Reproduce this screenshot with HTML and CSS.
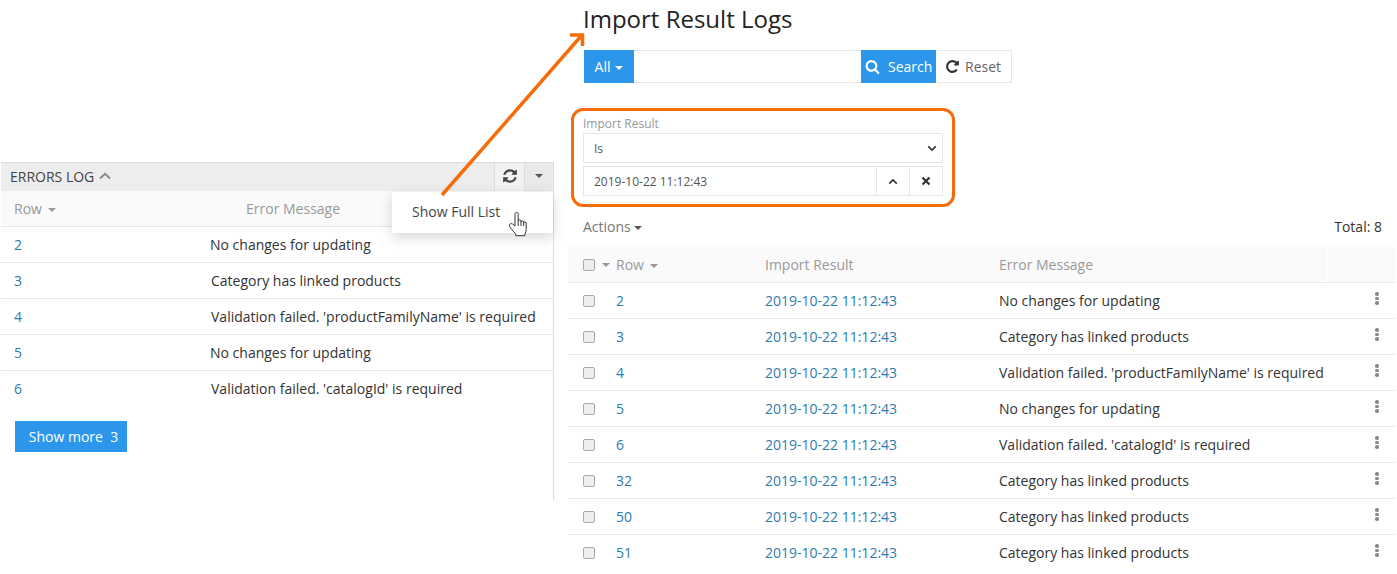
FILE: index.html
```html
<!DOCTYPE html>
<html lang="en">
<head>
  <meta charset="UTF-8">
  <title>Import Result Logs</title>
  <link rel="stylesheet" href="styles.css">
</head>
<body>
  <div class="page">
    <section class="panel">
      <div class="panel-title">
        <span class="panel-name">ERRORS LOG</span>
        <svg class="chevron" viewBox="0 0 12 8"><path d="M1 6.500 6 1.800l5 4.700" /></svg>
        <div class="panel-tools">
          <button class="tool tool-refresh">
            <svg class="fa" viewBox="0 0 1792 1792"><path d="M1639 1056q0 5-1 7-64 268-268 434.500t-478 166.500q-146 0-282.500-55t-243.500-157l-129 129q-19 19-45 19t-45-19-19-45v-448q0-26 19-45t45-19h448q26 0 45 19t19 45-19 45l-137 137q71 66 161 102t187 36q134 0 250-65t186-179q11-17 53-117 8-23 30-23h192q13 0 22.500 9.500t9.500 22.500zm25-800v448q0 26-19 45t-45 19h-448q-26 0-45-19t-19-45 19-45l138-138q-148-137-349-137-134 0-250 65t-186 179q-11 17-53 117-8 23-30 23h-199q-13 0-22.500-9.500t-9.500-22.500v-7q65-268 270-434.500t480-166.500q146 0 284 55.500t245 156.500l130-129q19-19 45-19t45 19 19 45z" /></svg>
          </button>
          <button class="tool tool-menu"><span class="caret caret-dark"></span></button>
        </div>
        <div class="menu">
          Show Full List
          <svg class="hand" viewBox="0 0 20 26"><path d="M7 15V3.200c0-2.400 3.200-2.400 3.200 0V10c0-1.600 2.800-1.600 2.800 0v1c0-1.500 2.700-1.500 2.700 0v1c0-1.400 2.500-1.400 2.500 0v6.500c0 2-.6 3-1.300 4.500v1.700H7.800v-1.500C6 21 4.500 19.500 2.800 17.200 1 14.800 1.200 13.200 2.500 12.700 3.800 12.300 5.500 13.500 7 15Z" /><path d="M10.200 10v5M13 11v4M15.700 12v3" /></svg>
        </div>
      </div>
      <div class="row row-head">
        <span class="cell-row">Row <span class="caret"></span></span>
        <span class="cell-head-msg">Error Message</span>
      </div>
      <div class="row"><a class="cell-row link">2</a><span class="nudge">No changes for updating</span></div>
      <div class="row"><a class="cell-row link">3</a><span>Category has linked products</span></div>
      <div class="row"><a class="cell-row link">4</a><span>Validation failed. 'productFamilyName' is required</span></div>
      <div class="row"><a class="cell-row link">5</a><span class="nudge">No changes for updating</span></div>
      <div class="row"><a class="cell-row link">6</a><span>Validation failed. 'catalogId' is required</span></div>
      <button class="btn-more">Show more&nbsp; 3</button>
    </section>

    <main class="logs">
      <h1>Import Result Logs</h1>

      <div class="search">
        <button class="btn-all">All<span class="caret caret-white"></span></button>
        <div class="search-input"></div>
        <button class="btn-search">
          <svg class="fa" viewBox="0 0 1792 1792"><path d="M1216 832q0-185-131.500-316.500t-316.500-131.500-316.500 131.500-131.500 316.500 131.500 316.500 316.500 131.500 316.500-131.500 131.500-316.500zm512 832q0 52-38 90t-90 38q-54 0-90-38l-343-342q-179 124-399 124-143 0-273.500-55.500t-225-150-150-225-55.500-273.500 55.500-273.500 150-225 225-150 273.500-55.500 273.500 55.500 225 150 150 225 55.500 273.500q0 220-124 399l343 343q37 37 37 90z" /></svg>
          Search
        </button>
        <button class="btn-reset">
          <svg class="fa" viewBox="0 0 1792 1792"><path d="M1664 256v448q0 26-19 45t-45 19h-448q-42 0-59-40-17-39 14-69l138-138q-148-137-349-137-104 0-198.500 40.500t-163.500 109.500-109.500 163.500-40.500 198.500 40.500 198.500 109.500 163.500 163.500 109.500 198.500 40.500q119 0 225-52t179-147q7-10 23-12 15 0 25 9l137 138q9 8 9.500 20.500t-7.500 22.500q-109 132-264 204.500t-327 72.500q-156 0-298-61t-245-164-164-245-61-298 61-298 164-245 245-164 298-61q147 0 284.500 55.500t244.500 156.500l130-129q29-31 70-14 39 17 39 59z" /></svg>
          Reset
        </button>
      </div>

      <div class="filter">
        <div class="filter-label">Import Result</div>
        <div class="filter-select">
          Is
          <svg class="small-chevron" viewBox="0 0 12 8"><path d="M1.500 1.500 6 6l4.500-4.500" /></svg>
        </div>
        <div class="filter-value">
          <span class="filter-text">2019-10-22 11:12:43</span>
          <span class="filter-btn"><svg class="small-chevron" viewBox="0 0 12 8"><path d="M1.500 6.500 6 2l4.500 4.500" /></svg></span>
          <span class="filter-btn"><svg class="small-x" viewBox="0 0 10 10"><path d="M1.500 1.500l7 7M8.500 1.500l-7 7" /></svg></span>
        </div>
      </div>

      <div class="actions">
        <span>Actions<span class="caret caret-dark"></span></span>
        <span class="total">Total: 8</span>
      </div>

      <div class="grid-row grid-head">
        <span class="check-cell"><span class="check"></span><span class="caret"></span></span>
        <span>Row <span class="caret"></span></span>
        <span>Import Result</span>
        <span>Error Message</span>
        <span class="head-end"></span>
      </div>
      <div class="grid-row"><span class="check-cell"><span class="check"></span></span><a class="link">2</a><a class="link">2019-10-22 11:12:43</a><span>No changes for updating</span><span class="dots"><i></i><i></i><i></i></span></div>
      <div class="grid-row"><span class="check-cell"><span class="check"></span></span><a class="link">3</a><a class="link">2019-10-22 11:12:43</a><span>Category has linked products</span><span class="dots"><i></i><i></i><i></i></span></div>
      <div class="grid-row"><span class="check-cell"><span class="check"></span></span><a class="link">4</a><a class="link">2019-10-22 11:12:43</a><span>Validation failed. 'productFamilyName' is required</span><span class="dots"><i></i><i></i><i></i></span></div>
      <div class="grid-row"><span class="check-cell"><span class="check"></span></span><a class="link">5</a><a class="link">2019-10-22 11:12:43</a><span>No changes for updating</span><span class="dots"><i></i><i></i><i></i></span></div>
      <div class="grid-row"><span class="check-cell"><span class="check"></span></span><a class="link">6</a><a class="link">2019-10-22 11:12:43</a><span>Validation failed. 'catalogId' is required</span><span class="dots"><i></i><i></i><i></i></span></div>
      <div class="grid-row"><span class="check-cell"><span class="check"></span></span><a class="link">32</a><a class="link">2019-10-22 11:12:43</a><span>Category has linked products</span><span class="dots"><i></i><i></i><i></i></span></div>
      <div class="grid-row"><span class="check-cell"><span class="check"></span></span><a class="link">50</a><a class="link">2019-10-22 11:12:43</a><span>Category has linked products</span><span class="dots"><i></i><i></i><i></i></span></div>
      <div class="grid-row"><span class="check-cell"><span class="check"></span></span><a class="link">51</a><a class="link">2019-10-22 11:12:43</a><span>Category has linked products</span><span class="dots"><i></i><i></i><i></i></span></div>
    </main>
  </div>

  <svg class="arrow" viewBox="0 0 1397 574">
    <path d="M442 195 582 35" />
    <path d="M570 35H582.500V46" />
  </svg>
</body>
</html>
```

FILE: styles.css
```css
* {
  box-sizing: border-box;
}
html, body {
  height: 100%;
}
body {
  margin: 0;
  overflow: hidden;
  background: #fff;
  font-family: 'Open Sans', 'Noto Sans', sans-serif;
  font-size: 14px;
  color: #333;
}
button {
  font: inherit;
  border: none;
  padding: 0;
}
.page {
  display: flex;
  align-items: flex-start;
  padding-left: 1px;
}
.link {
  color: #2e7bb0;
}
.fa {
  width: 14px;
  height: 14px;
  fill: currentColor;
  flex: none;
}
.caret {
  display: inline-block;
  width: 0;
  height: 0;
  margin-left: 2px;
  vertical-align: middle;
  border-top: 4px solid #999;
  border-left: 4px solid transparent;
  border-right: 4px solid transparent;
}
.caret-dark {
  border-top-color: #555;
}
.caret-white {
  border-top-color: #fff;
}

/* left panel */
.panel {
  width: 553px;
  height: 338px;
  margin-top: 162px;
  border-right: 1px solid #ddd;
}
.panel-title {
  position: relative;
  display: flex;
  align-items: center;
  height: 29px;
  padding: 0 1px 2px 9px;
  background: #ededed;
  border-top: 1px solid #ddd;
  color: #444;
}
.chevron {
  width: 12px;
  height: 8px;
  margin-left: 5px;
  fill: none;
  stroke: #888;
  stroke-width: 2;
}
.panel-tools {
  display: flex;
  margin-left: auto;
  height: 28px;
  margin-bottom: -2px;
}
.tool {
  display: flex;
  align-items: center;
  justify-content: center;
  height: 28px;
  padding-bottom: 2px;
  background: #f1f1f1;
  color: #444;
}
.tool-refresh {
  width: 31px;
  border-left: 1px solid #ddd;
  border-right: 1px solid #ddd;
}
.tool-refresh .fa {
  width: 16px;
  height: 16px;
}
.tool-menu {
  width: 27px;
  padding-right: 2px;
  background: #e9e9e9;
}
.menu {
  position: absolute;
  top: 29px;
  right: 0;
  width: 161px;
  height: 41px;
  padding: 10px 20px;
  background: #fff;
  box-shadow: 0 4px 12px rgba(0, 0, 0, 0.16);
  color: #444;
  z-index: 2;
}
.hand {
  position: absolute;
  left: 116px;
  top: 19px;
  width: 20px;
  height: 26px;
  fill: #fff;
  stroke: #333;
  stroke-width: 1;
}
.row {
  display: flex;
  align-items: center;
  height: 36px;
  border-bottom: 1px solid #e6e6e6;
}
.row:nth-last-child(2) {
  border-bottom-color: transparent;
}
.row-head {
  background: #fafafa;
  color: #999;
}
.cell-row {
  width: 210px;
  padding-left: 13px;
}
.cell-head-msg {
  margin-left: 35px;
}
.nudge {
  margin-left: -1px;
}
.btn-more {
  display: block;
  width: 112px;
  height: 31px;
  margin: 14px 0 0 14px;
  padding-left: 5px;
  background: #2b96ea;
  color: #fff;
}

/* right side */
.logs {
  width: 828px;
  margin-left: 14px;
}
h1 {
  margin: 0;
  height: 50px;
  padding: 2px 0 0 15px;
  font-size: 24px;
  font-weight: 400;
  line-height: 33px;
  color: #222;
}
.search {
  display: flex;
  height: 33px;
  width: 428px;
  margin-left: 16px;
}
.btn-all {
  width: 50px;
  background: #2b96ea;
  color: #fff;
}
.btn-all .caret {
  margin-left: 5px;
}
.search-input {
  width: 227px;
  border: 1px solid #e6e6e6;
  border-left: none;
  border-right: none;
}
.btn-search {
  display: flex;
  align-items: center;
  gap: 8px;
  width: 75px;
  padding-left: 5px;
  background: #2b96ea;
  color: #fff;
}
.btn-search .fa {
  width: 15px;
  height: 15px;
  margin-left: -1px;
}
.btn-reset {
  display: flex;
  align-items: center;
  gap: 5px;
  width: 76px;
  padding-left: 9px;
  background: #fff;
  border: 1px solid #e6e6e6;
  border-left: none;
  color: #666;
}
.btn-reset .fa {
  width: 15px;
  height: 15px;
  color: #333;
}
.filter {
  width: 384px;
  height: 99px;
  margin: 25px 0 0 3px;
  padding: 5px 9px 0;
  border: 3px solid #f56d0a;
  border-radius: 12px;
}
.filter-label {
  height: 17px;
  font-size: 12px;
  line-height: 15px;
  color: #999;
}
.filter-select, .filter-value {
  display: flex;
  align-items: center;
  width: 360px;
  height: 30px;
  border: 1px solid #e6e6e6;
  font-size: 12px;
  color: #555;
}
.filter-select {
  justify-content: space-between;
  padding: 0 5px 0 10px;
  margin-bottom: 3px;
}
.filter-text {
  flex: 1;
  padding-left: 10px;
}
.filter-btn {
  display: flex;
  align-items: center;
  justify-content: center;
  width: 33px;
  height: 28px;
  border-left: 1px solid #e6e6e6;
}
.small-chevron {
  width: 10px;
  height: 7px;
  fill: none;
  stroke: #333;
  stroke-width: 2;
}
.small-x {
  width: 10px;
  height: 10px;
  fill: none;
  stroke: #333;
  stroke-width: 2.2;
}
.actions {
  display: flex;
  justify-content: space-between;
  align-items: center;
  height: 40px;
  padding: 0 14px 2px 15px;
  color: #777;
}
.actions .caret {
  margin-left: 3px;
}
.total {
  color: #333;
}
.grid-row {
  display: grid;
  grid-template-columns: 48px 149px 234px 1fr 69px;
  align-items: center;
  height: 36px;
  border-bottom: 1px solid #e9e9e9;
}
.grid-row:last-child {
  border-bottom-color: transparent;
}
.grid-head {
  background: #fafafa;
  color: #999;
}
.head-end {
  height: 35px;
  border-left: 1px solid #fff;
}
.check-cell {
  display: flex;
  align-items: center;
  gap: 5px;
  padding-left: 15px;
}
.check {
  width: 12px;
  height: 12px;
  background: #eee;
  border: 1px solid #aaa;
  border-radius: 2px;
}
.dots {
  display: flex;
  flex-direction: column;
  align-items: center;
  gap: 1px;
  padding-left: 31px;
  margin-top: -4px;
}
.dots i {
  width: 3.500px;
  height: 3.500px;
  border-radius: 50%;
  background: #888;
}

/* the call-out arrow drawn over both panels */
.arrow {
  position: absolute;
  left: 0;
  top: 0;
  width: 1397px;
  height: 574px;
  fill: none;
  stroke: #f56d0a;
  stroke-width: 3.500;
  pointer-events: none;
  z-index: 3;
}
```
